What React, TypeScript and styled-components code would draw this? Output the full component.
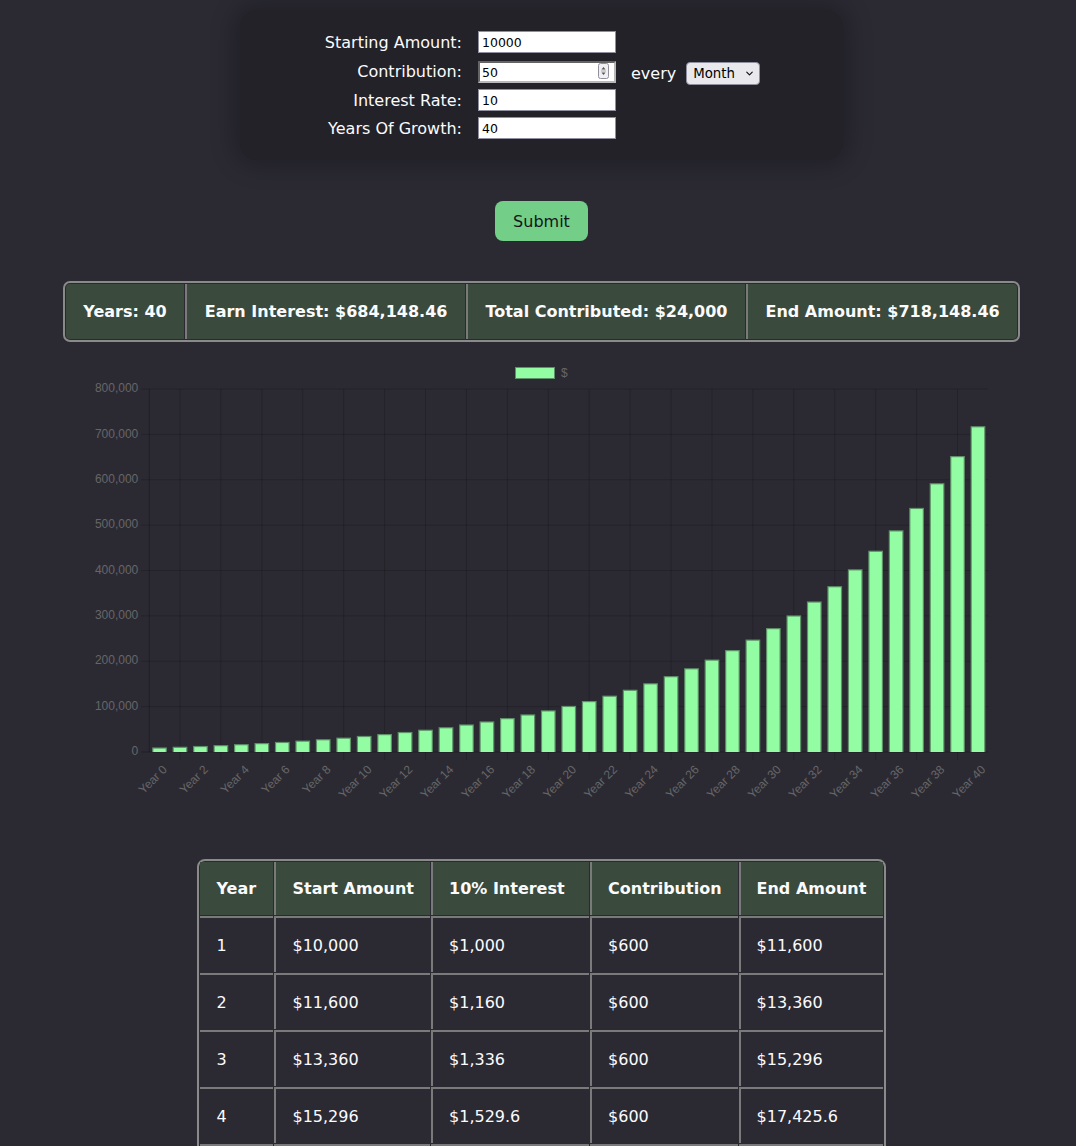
import React from "react";
import styled, { createGlobalStyle } from "styled-components";
import { ChevronDown } from "lucide-react";

const GlobalStyle = createGlobalStyle`
  html, body { margin: 0; padding: 0; background: #2b2a33; }
  body { font-family: "DejaVu Sans", Verdana, sans-serif; color: #fbfbfe; }
`;

const Page = styled.main`
  display: flex;
  flex-direction: column;
  align-items: center;
  padding: 10px 0 40px 7px;
`;

const FormPanel = styled.section`
  width: 603px;
  box-sizing: border-box;
  padding: 21px 0 21px 2px;
  background: #232228;
  border-radius: 18px;
  box-shadow: 0 0 22px 8px rgba(0, 0, 0, 0.22);
  display: flex;
  justify-content: center;
`;

const FieldGrid = styled.div`
  display: grid;
  grid-template-columns: 139px 138px 130px;
  grid-template-rows: 22px 24px 22px 22px;
  column-gap: 16px;
  row-gap: 6px;
  align-items: center;
`;

const FieldLabel = styled.label`
  text-align: right;
  font-size: 16px;
  line-height: 19px;
  white-space: nowrap;
  color: #fbfbfe;
`;

const InputWrap = styled.div<{ $end?: boolean }>`
  position: relative;
  width: 138px;
  height: 22px;
  align-self: ${(p) => (p.$end ? "end" : "center")};
`;

const TextInput = styled.input<{ $inset?: boolean }>`
  display: block;
  width: 138px;
  height: 22px;
  box-sizing: border-box;
  margin: 0;
  padding: 0 ${(p) => (p.$inset ? "2px" : "3px")};
  border: ${(p) => (p.$inset ? "2px inset #b8b8b8" : "1px solid #8f8f9d")};
  background: #ffffff;
  color: #000000;
  font-family: "DejaVu Sans", sans-serif;
  font-size: 12.5px;
  outline: none;
`;

const Spinner = styled.svg`
  position: absolute;
  right: 7px;
  top: 2px;
`;

const Extras = styled.div`
  display: flex;
  align-items: center;
  gap: 10px;
  margin-left: -1px;
  font-size: 16px;
  line-height: 19px;
  align-self: end;
  margin-bottom: -2px;
`;

const SelectWrap = styled.div`
  position: relative;
  width: 74px;
  height: 23px;
`;

const Select = styled.select`
  appearance: none;
  -webkit-appearance: none;
  width: 74px;
  height: 23px;
  box-sizing: border-box;
  margin: 0;
  padding: 0 0 0 6px;
  border: 1px solid #8f8f9d;
  border-radius: 4px;
  background: #e9e9ed;
  color: #000000;
  font-family: "DejaVu Sans", sans-serif;
  font-size: 13.33px;
`;

const SelectChevron = styled.span`
  position: absolute;
  right: 5px;
  top: 6px;
  display: flex;
  color: #111;
  pointer-events: none;
`;

const SubmitButton = styled.button`
  margin-top: 41px;
  width: 93px;
  height: 40px;
  border: none;
  border-radius: 8px;
  background: #73cf88;
  color: #15141a;
  font-family: "DejaVu Sans", sans-serif;
  font-size: 16px;
  padding: 0;
`;

const SummaryBar = styled.div`
  margin-top: 40px;
  display: flex;
  gap: 1px;
  padding: 1px;
  border: 2px solid #8a8a8a;
  border-radius: 7px;
  background: #2b2a33;
`;

const SummaryCell = styled.div`
  background: #3a4a3c;
  padding: 18px 17.5px;
  font-size: 16px;
  line-height: 19px;
  font-weight: bold;
  white-space: nowrap;
  color: #fbfbfe;
  & + & {
    border-left: 2px solid #7a7a7a;
  }
  &:first-child { border-radius: 4px 0 0 4px; }
  &:last-child { border-radius: 0 4px 4px 0; }
`;

const ChartBox = styled.div`
  margin-top: 15px;
  width: 955px;
  height: 460px;
`;

const ChartSvg = styled.svg`
  display: block;
  font-family: "Liberation Sans", Arial, sans-serif;
`;

const DataTable = styled.table`
  margin-top: 42px;
  border-collapse: separate;
  border-spacing: 1px;
  border: 2px solid #8a8a8a;
  border-radius: 8px;
  font-size: 16px;
  line-height: 19px;
  color: #fbfbfe;
`;

const HeadCell = styled.th<{ $w: number }>`
  width: ${(p) => p.$w}px;
  background: #3a4a3c;
  padding: 17px 16px;
  text-align: left;
  font-weight: bold;
  white-space: nowrap;
  & + & {
    border-left: 2px solid #7a7a7a;
  }
`;

const BodyCell = styled.td`
  padding: 18px 16px 17px;
  text-align: left;
  white-space: nowrap;
  border-top: 2px solid #7a7a7a;
  & + & {
    border-left: 2px solid #7a7a7a;
  }
`;

const round2 = (n: number) => Math.round(n * 100) / 100;

type Row = { year: number; start: number; interest: number; contribution: number; end: number };
const rows: Row[] = [];
const values: number[] = [10000];
for (let y = 1; y <= 40; y++) {
  const start = values[y - 1];
  const interest = Math.round(start * 10) / 100;
  const end = round2(start + interest + 600);
  rows.push({ year: y, start, interest, contribution: 600, end });
  values.push(end);
}

const fmtNum = (n: number) =>
  n.toLocaleString("en-US", { maximumFractionDigits: 2 });
const fmt = (n: number) => "$" + fmtNum(round2(n));

const totalInterest = rows.reduce((s, r) => s + r.interest, 0);

const W = 955;
const H = 460;
const plotL = 85.3;
const plotR = 924.2;
const catW = (plotR - plotL) / 41;
const y0 = 395;
const yTop = 32;
const scale = (y0 - yTop) / 800000;
const cx = (i: number) => plotL + catW * (i + 0.5);

function BarChart() {
  const grid = "rgba(0,0,0,0.18)";
  const barW = catW * 0.72;
  return (
    <ChartSvg width={W} height={H} viewBox={`0 0 ${W} ${H}`}>
      <rect x={451} y={10} width={40} height={12} fill="#5f9169" />
      <rect x={452} y={11} width={38} height={10} fill="#93fda3" />
      <text x={497} y={16.5} fontSize={12} fill="#666" dominantBaseline="middle">$</text>
      {Array.from({ length: 9 }, (_, k) => {
        const y = y0 - k * 100000 * scale;
        return (
          <g key={k}>
            <line x1={plotL - 8} x2={plotR} y1={y} y2={y} stroke={k === 0 ? "rgba(0,0,0,0.25)" : grid} strokeWidth={1} />
            <text x={plotL - 11} y={y} fontSize={12} fill="#666" textAnchor="end" dominantBaseline="middle">
              {fmtNum(k * 100000)}
            </text>
          </g>
        );
      })}
      <line x1={plotL} x2={plotL} y1={yTop} y2={y0} stroke="rgba(0,0,0,0.25)" />
      {Array.from({ length: 20 }, (_, k) => {
        const x = cx(2 * k + 1);
        return <line key={k} x1={x} x2={x} y1={yTop} y2={y0 + 8} stroke={grid} />;
      })}
      {values.map((v, i) => {
        const h = v * scale;
        const x = cx(i) - barW / 2;
        return (
          <g key={i}>
            <rect x={x} y={y0 - h} width={barW} height={h} fill="#5f9169" />
            <rect x={x + 1.2} y={y0 - h + 1.2} width={barW - 2.4} height={Math.max(h - 1.2, 0)} fill="#93fda3" />
          </g>
        );
      })}
      {values.map((_, i) => {
        if (i % 2 !== 0) return null;
        const ax = cx(i) + 6;
        const ay = y0 + 16;
        return (
          <text
            key={i}
            x={ax}
            y={ay}
            fontSize={12}
            fill="#666"
            textAnchor="end"
            dominantBaseline="middle"
            transform={`rotate(-45 ${ax} ${ay})`}
          >
            {`Year ${i}`}
          </text>
        );
      })}
    </ChartSvg>
  );
}

const headers: [string, number][] = [
  ["Year", 41],
  ["Start Amount", 121],
  ["10% Interest", 124],
  ["Contribution", 113],
  ["End Amount", 110],
];

export default function App() {
  return (
    <>
      <GlobalStyle />
      <Page>
        <FormPanel>
          <FieldGrid>
            <FieldLabel>Starting Amount:</FieldLabel>
            <InputWrap>
              <TextInput defaultValue="10000" />
            </InputWrap>
            <span />
            <FieldLabel>Contribution:</FieldLabel>
            <InputWrap $end>
              <TextInput $inset defaultValue="50" />
              <Spinner width="11" height="16" viewBox="0 0 11 16">
                <rect x="0.5" y="0.5" width="10" height="15" rx="2" fill="#f0f0f4" stroke="#8f8f9d" />
                <path d="M3.5 6.5 L5.5 4 L7.5 6.5 Z" fill="#555" />
                <path d="M3.5 9.5 L5.5 12 L7.5 9.5 Z" fill="#555" />
                <line x1="3" x2="8" y1="8" y2="8" stroke="#aaa" />
              </Spinner>
            </InputWrap>
            <Extras>
              <span>every</span>
              <SelectWrap>
                <Select defaultValue="Month">
                  <option>Month</option>
                  <option>Year</option>
                </Select>
                <SelectChevron>
                  <ChevronDown size={11} strokeWidth={2.5} />
                </SelectChevron>
              </SelectWrap>
            </Extras>
            <FieldLabel>Interest Rate:</FieldLabel>
            <InputWrap>
              <TextInput defaultValue="10" />
            </InputWrap>
            <span />
            <FieldLabel>Years Of Growth:</FieldLabel>
            <InputWrap>
              <TextInput defaultValue="40" />
            </InputWrap>
            <span />
          </FieldGrid>
        </FormPanel>
        <SubmitButton>Submit</SubmitButton>
        <SummaryBar>
          <SummaryCell>Years: 40</SummaryCell>
          <SummaryCell>Earn Interest: {fmt(totalInterest)}</SummaryCell>
          <SummaryCell>Total Contributed: {fmt(24000)}</SummaryCell>
          <SummaryCell>End Amount: {fmt(values[40])}</SummaryCell>
        </SummaryBar>
        <ChartBox>
          <BarChart />
        </ChartBox>
        <DataTable>
          <thead>
            <tr>
              {headers.map(([h, w]) => (
                <HeadCell key={h} $w={w}>{h}</HeadCell>
              ))}
            </tr>
          </thead>
          <tbody>
            {rows.map((r) => (
              <tr key={r.year}>
                <BodyCell>{r.year}</BodyCell>
                <BodyCell>{fmt(r.start)}</BodyCell>
                <BodyCell>{fmt(r.interest)}</BodyCell>
                <BodyCell>{fmt(r.contribution)}</BodyCell>
                <BodyCell>{fmt(r.end)}</BodyCell>
              </tr>
            ))}
          </tbody>
        </DataTable>
      </Page>
    </>
  );
}
